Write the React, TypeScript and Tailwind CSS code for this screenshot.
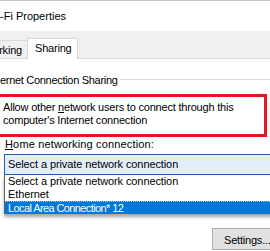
import React from "react";

export default function App() {
  return (
    <div className="w-[270px] h-[251px] overflow-hidden bg-white flex flex-col font-['Liberation_Sans',Arial,sans-serif] text-[11px] leading-[13px] text-black">
      {/* title bar */}
      <div className="h-[31px] shrink-0 border-t border-[#c8c8c8] pt-[9px] whitespace-nowrap">
        -Fi Properties
      </div>

      {/* tab strip */}
      <div className="h-[28px] shrink-0 bg-[#f0f0f0] flex items-end">
        <div className="w-[27px] h-[19px] border-t border-b border-[#d9d9d9] flex justify-end pr-[5px] pt-[3px] tracking-[-0.2px]">
          rking
        </div>
        <div className="w-[51px] h-[21px] border-l border-t border-r border-[#d9d9d9] bg-white pl-[7px] pt-[3px] tracking-[-0.2px]">
          Sharing
        </div>
        <div className="flex-1 h-full border-b border-[#d9d9d9]" />
      </div>

      {/* group label */}
      <div className="mt-[15px] h-[13px] shrink-0 flex items-start">
        <span className="whitespace-nowrap tracking-[-0.3px]">ernet Connection Sharing</span>
        <div className="ml-[2px] mt-[5px] flex-1 h-px bg-[#dcdcdc]" />
      </div>

      {/* highlighted checkbox text */}
      <div className="mt-[7px] w-[267px] h-[43px] shrink-0 border-[3px] border-l-0 border-[#e8141f] pl-[3px] pt-[4px] tracking-[-0.2px] whitespace-nowrap">
        <div>
          Allow other <u>n</u>etwork users to connect through this
        </div>
        <div>computer's Internet connection</div>
      </div>

      {/* home networking label */}
      <div className="mt-[1px] pl-[5px] shrink-0 whitespace-nowrap tracking-[0.15px]">
        <u>H</u>ome networking connection:
      </div>

      {/* combobox closed */}
      <div className="mt-[3px] ml-[4px] w-[280px] h-[21px] shrink-0 border border-[#1a62ad] bg-[#e3eefa] pl-[3px] pt-[3px] whitespace-nowrap tracking-[-0.1px]">
        Select a private network connection
      </div>

      {/* dropdown list */}
      <div className="ml-[4px] w-[280px] shrink-0 border-l border-[#646464] bg-white shadow-[0_3px_3px_rgba(0,0,0,0.35)] whitespace-nowrap tracking-[-0.1px]">
        <div className="h-[13px] pl-[3px]">Select a private network connection</div>
        <div className="h-[13px] pl-[3px]">Ethernet</div>
        <div className="h-[13px] pl-[3px] bg-[#0078d7] text-white border-t border-dotted border-[#9cc8ee] leading-[12px] tracking-[-0.6px]">
          Local Area Connection* 12
        </div>
      </div>

      {/* settings button */}
      <div className="mt-[14px] ml-[212px] w-[75px] h-[22px] shrink-0 border border-[#adadad] bg-[#e1e1e1] pl-[11px] pt-[5px] whitespace-nowrap tracking-[-0.2px]">
        Settin<u>g</u>s...
      </div>
    </div>
  );
}
